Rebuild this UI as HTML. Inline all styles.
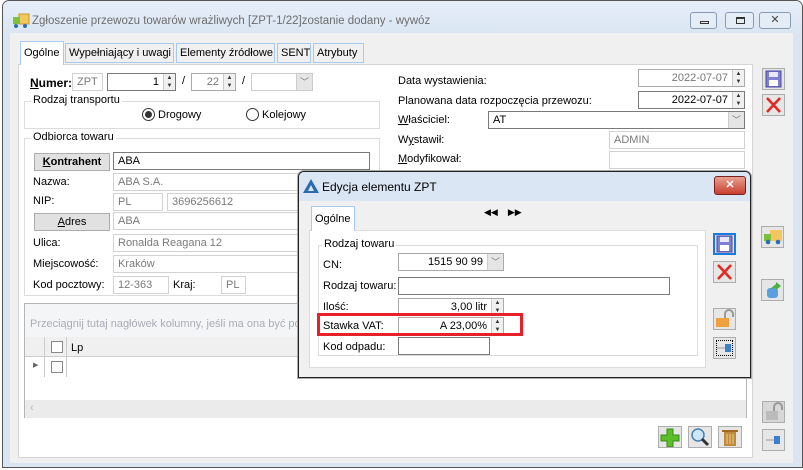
<!DOCTYPE html>
<html><head><meta charset="utf-8"><style>
*{box-sizing:border-box;margin:0;padding:0}
body{width:803px;height:470px;overflow:hidden;background:#fff;font-family:"Liberation Sans",sans-serif;font-size:11px;color:#000;position:relative}
.a{position:absolute}
.box{position:absolute;background:#fff;border:1px solid #c8c8c8;height:18px;line-height:16px;padding:0 4px;color:#000;white-space:nowrap;overflow:hidden}
.dis{color:#7a7a7a;border-color:#d2d2d2}
.dk{border-color:#7a7a7a}
.r{text-align:right}
.lbl{position:absolute;white-space:nowrap}
.grp{position:absolute;border:1px solid #dcdcdc}
.gt{position:absolute;top:-8px;left:6px;background:#fff;padding:0 2px}
.btn{position:absolute;background:#e1e1e1;border:1px solid #adadad;text-align:center;line-height:16px}
.ib{position:absolute;width:23px;height:22px;background:#e6e6e6;border:1px solid #adadad}
.spin{position:absolute;right:0;top:0;width:12px;height:100%;border-left:1px solid #ccc;background:#f0f0f0;font-size:6px;line-height:8px;text-align:center;color:#333}
.cb{position:absolute;right:0;top:0;width:16px;height:100%;border-left:1px solid #ccc;background:#e5e5e5;text-align:center;color:#777;font-size:9px;line-height:16px}
.tab{position:absolute;top:43px;height:20px;border:1px solid #a7cbf0;background:#f0f0f0;line-height:18px;padding:0 3px;white-space:nowrap;overflow:hidden}
</style></head><body>
<div class="a" style="left:2px;top:0;width:801px;height:468px;border:1px solid #555;border-radius:7px 7px 0 0;background:#dae5f2"></div>
<div class="a" style="left:3px;top:1px;width:799px;height:32px;background:linear-gradient(#e6eef8,#dbe6f3);border-radius:6px 6px 0 0"></div>
<svg class="a" style="left:12px;top:13px" width="18" height="16"><rect x="7" y="1" width="10" height="10" fill="#f2c75c" stroke="#c99a2e"/><rect x="1" y="4" width="7" height="7" fill="#7cc13c"/><circle cx="4" cy="13" r="2" fill="#2a6fb5"/><circle cx="13" cy="13" r="2" fill="#2a6fb5"/></svg>
<div class="lbl" style="left:32px;top:15px;font-size:11.5px;color:#6d6d6d">Zgłoszenie przewozu towarów wrażliwych [ZPT-1/22]zostanie dodany - wywóz</div>
<div class="a" style="left:690px;top:12px;width:27px;height:17px;border:1px solid #8a9bb0;border-radius:3px;background:#e4ecf5"><div class="a" style="left:9px;top:8px;width:9px;height:3px;border:1px solid #333"></div></div>
<div class="a" style="left:725px;top:12px;width:29px;height:17px;border:1px solid #8a9bb0;border-radius:3px;background:#e4ecf5"><div class="a" style="left:10px;top:4px;width:9px;height:7px;border:1px solid #333;border-top-width:2px"></div></div>
<div class="a" style="left:759px;top:12px;width:32px;height:17px;border:1px solid #8a9bb0;border-radius:3px;background:#e4ecf5;text-align:center;line-height:14px;color:#444">✕</div>
<div class="a" style="left:10px;top:33px;width:783px;height:430px;background:#f0f0f0"></div>
<div class="a" style="left:18px;top:64px;width:735px;height:394px;background:#fff;border:1px solid #d5d5d5"></div>
<div class="tab" style="left:20px;top:41px;width:44px;height:24px;background:#fff;border-bottom:none;line-height:22px">Ogólne</div>
<div class="tab" style="left:65px;width:109px">Wypełniający i uwagi</div>
<div class="tab" style="left:176px;width:99px">Elementy źródłowe</div>
<div class="tab" style="left:277px;width:34px">SENT</div>
<div class="tab" style="left:313px;width:51px">Atrybuty</div>
<div class="lbl" style="left:30px;top:76px;font-weight:bold;font-size:12px"><u>N</u>umer:</div>
<div class="box dis" style="left:72px;top:73px;width:31px">ZPT</div>
<div class="box r dk" style="left:107px;top:73px;width:69px;padding-right:16px">1<div class="spin">▲<br>▼</div></div>
<div class="lbl" style="left:182px;top:75px">/</div>
<div class="box r" style="left:191px;top:73px;width:45px;padding-right:16px;color:#777;border-color:#aaa">22<div class="spin">▲<br>▼</div></div>
<div class="lbl" style="left:242px;top:75px">/</div>
<div class="box" style="left:251px;top:73px;width:62px;border-color:#ccc"><div class="cb">﹀</div></div>
<div class="grp" style="left:24px;top:101px;width:356px;height:28px"><span class="gt">Rodzaj transportu</span></div>
<div class="a" style="left:142px;top:108px;width:13px;height:13px;border:1px solid #333;border-radius:50%"><div class="a" style="left:2px;top:2px;width:7px;height:7px;background:#333;border-radius:50%"></div></div>
<div class="lbl" style="left:158px;top:109px">Drogowy</div>
<div class="a" style="left:246px;top:108px;width:13px;height:13px;border:1px solid #333;border-radius:50%"></div>
<div class="lbl" style="left:262px;top:109px">Kolejowy</div>
<div class="grp" style="left:24px;top:138px;width:356px;height:158px"><span class="gt">Odbiorca towaru</span></div>
<div class="btn" style="left:34px;top:153px;width:76px;height:18px;font-weight:bold"><u>K</u>ontrahent</div>
<div class="box dk" style="left:113px;top:152px;width:257px">ABA</div>
<div class="lbl" style="left:33px;top:176px">Nazwa:</div>
<div class="box dis" style="left:113px;top:173px;width:200px">ABA S.A.</div>
<div class="lbl" style="left:33px;top:195px">NIP:</div>
<div class="box dis" style="left:113px;top:193px;width:50px">PL</div>
<div class="box dis" style="left:167px;top:193px;width:150px">3696256612</div>
<div class="btn" style="left:34px;top:213px;width:76px;height:18px"><u>A</u>dres</div>
<div class="box dis" style="left:113px;top:212px;width:200px">ABA</div>
<div class="lbl" style="left:33px;top:237px">Ulica:</div>
<div class="box dis" style="left:113px;top:234px;width:200px">Ronalda Reagana 12</div>
<div class="lbl" style="left:33px;top:258px">Miejscowość:</div>
<div class="box dis" style="left:113px;top:255px;width:200px">Kraków</div>
<div class="lbl" style="left:33px;top:279px">Kod pocztowy:</div>
<div class="box dis" style="left:113px;top:276px;width:56px">12-363</div>
<div class="lbl" style="left:173px;top:279px">Kraj:</div>
<div class="box dis" style="left:221px;top:276px;width:25px">PL</div>
<div class="a" style="left:24px;top:303px;width:723px;height:115px;border:1px solid #b5b5b5;background:#fff">
 <div class="a" style="left:0;top:0;width:100%;height:33px;background:#f4f5f7"></div>
 <div class="lbl" style="left:5px;top:14px;color:#a8adb5">Przeciągnij tutaj nagłówek kolumny, jeśli ma ona być pogrupowana</div>
 <div class="a" style="left:0;top:33px;width:100%;height:20px;background:#f0f0f0;border-bottom:1px solid #ccc"></div>
 <div class="a" style="left:19px;top:33px;width:1px;height:40px;background:#ccc"></div>
 <div class="a" style="left:41px;top:33px;width:1px;height:40px;background:#ccc"></div>
 <div class="a" style="left:26px;top:37px;width:12px;height:12px;border:1px solid #888;background:#fff"></div>
 <div class="lbl" style="left:46px;top:38px">Lp</div>
 <div class="a" style="left:26px;top:57px;width:12px;height:12px;border:1px solid #888"></div>
 <div class="lbl" style="left:8px;top:57px;font-size:7px;color:#666">▶</div>
 <div class="a" style="left:0;top:96px;width:100%;height:18px;background:#ebebeb"></div>
 <div class="lbl" style="left:5px;top:98px;color:#bbb">‹</div>
</div>
<div class="lbl" style="left:398px;top:75px">Data wystawienia:</div>
<div class="box r" style="left:638px;top:69px;width:107px;padding-right:16px;color:#777;border-color:#aaa">2022-07-07<div class="spin">▲<br>▼</div></div>
<div class="lbl" style="left:398px;top:95px">Planowana data rozpoczęcia przewozu:</div>
<div class="box r dk" style="left:638px;top:91px;width:107px;padding-right:16px">2022-07-07<div class="spin">▲<br>▼</div></div>
<div class="lbl" style="left:398px;top:114px"><u>W</u>łaściciel:</div>
<div class="box dk" style="left:488px;top:111px;width:257px;line-height:17px">AT<div class="cb">﹀</div></div>
<div class="lbl" style="left:398px;top:134px">W<u>y</u>stawił:</div>
<div class="box dis" style="left:609px;top:131px;width:136px">ADMIN</div>
<div class="lbl" style="left:398px;top:153px"><u>M</u>odyfikował:</div>
<div class="box dis" style="left:609px;top:151px;width:136px"></div>
<div class="ib" style="left:762px;top:68px"><svg width="21" height="20"><rect x="3" y="2" width="15" height="16" fill="#8080d0" stroke="#4848a0"/><rect x="6" y="3" width="9" height="5" fill="#e8e8f8"/><rect x="6" y="11" width="9" height="6" fill="#fff"/></svg></div>
<div class="ib" style="left:762px;top:94px"><svg width="21" height="20"><path d="M4 3 L17 17 M17 3 L4 17" stroke="#e8251f" stroke-width="2.5"/></svg></div>
<div class="ib" style="left:761px;top:226px"><svg width="22" height="20"><rect x="8" y="3" width="12" height="11" fill="#f5c560"/><rect x="2" y="7" width="7" height="7" fill="#7cc13c"/><circle cx="6" cy="15" r="2.3" fill="#2a6fb5"/><circle cx="16" cy="15" r="2.3" fill="#2a6fb5"/></svg></div>
<div class="ib" style="left:761px;top:279px"><svg width="22" height="20"><rect x="5" y="8" width="11" height="10" rx="3" fill="#5aa0e0"/><path d="M8 9 L14 4 L14 2 L19 6 L14 10 L14 8 Z" fill="#4cb040"/></svg></div>
<div class="ib" style="left:762px;top:401px;background:#d8d8d8"><svg width="21" height="20"><path d="M11 9 V5 a4 4 0 0 1 8 0 V8" fill="none" stroke="#999" stroke-width="2"/><rect x="3" y="9" width="12" height="9" fill="#bbb"/></svg></div>
<div class="ib" style="left:762px;top:429px"><svg width="21" height="20"><path d="M3 10 H11" stroke="#999"/><rect x="11" y="6" width="6" height="8" fill="#3a7fd0"/></svg></div>
<div class="ib" style="left:658px;top:426px;width:24px"><svg width="22" height="20"><path d="M8 2 H14 V8 H20 V14 H14 V20 H8 V14 H2 V8 H8 Z" fill="#5cbf2a" stroke="#3a8a18"/></svg></div>
<div class="ib" style="left:688px;top:426px;width:24px"><svg width="22" height="20"><circle cx="9" cy="8" r="6" fill="#cde6f8" stroke="#4a7fb0" stroke-width="1.5"/><path d="M13 12 L19 18" stroke="#333" stroke-width="3"/></svg></div>
<div class="ib" style="left:718px;top:426px;width:24px"><svg width="22" height="20"><rect x="5" y="5" width="12" height="14" fill="#c08a3a"/><rect x="3" y="3" width="16" height="2" fill="#a06a20"/><path d="M8 7 V17 M11 7 V17 M14 7 V17" stroke="#f0d090"/></svg></div>
<div class="a" style="left:298px;top:171px;width:453px;height:207px;border:1px solid #222;border-radius:6px 6px 0 0;background:#f0f0f0;box-shadow:0 0 0 1px #aaa"></div>
<div class="a" style="left:299px;top:172px;width:451px;height:29px;background:#dbe6f4;border-radius:5px 5px 0 0"></div>
<svg class="a" style="left:303px;top:179px" width="16" height="14"><path d="M8 0 L16 14 H0 Z" fill="#2b6cb0"/><path d="M8 6 L11 12 H5 Z" fill="#dbe6f4"/></svg>
<div class="lbl" style="left:322px;top:180px;font-size:12px">Edycja elementu ZPT</div>
<div class="a" style="left:714px;top:176px;width:32px;height:19px;border:1px solid #7a2020;border-radius:3px;background:linear-gradient(#e8a090,#c84030);color:#fff;text-align:center;font-weight:bold;line-height:17px">✕</div>
<div class="a" style="left:309px;top:230px;width:397px;height:138px;background:#fff;border:1px solid #dcdcdc"></div>
<div class="a" style="left:311px;top:206px;width:44px;height:25px;background:#fff;border:1px solid #a7cbf0;border-bottom:none;padding:6px 0 0 3px">Ogólne</div>
<div class="lbl" style="left:484px;top:207px;font-size:9px">◀◀&nbsp;&nbsp;&nbsp;&nbsp;▶▶</div>
<div class="grp" style="left:318px;top:245px;width:380px;height:111px"><span class="gt" style="left:3px">Rodzaj towaru</span></div>
<div class="lbl" style="left:323px;top:259px">CN:</div>
<div class="box r" style="left:398px;top:253px;width:106px;padding-right:20px;border-color:#aaa">1515 90 99<div class="cb">﹀</div></div>
<div class="lbl" style="left:323px;top:280px">Rodzaj towaru:</div>
<div class="box dk" style="left:398px;top:277px;width:272px"></div>
<div class="lbl" style="left:323px;top:301px">Ilość:</div>
<div class="box r" style="left:398px;top:298px;width:106px;padding-right:16px;border-color:#aaa">3,00 litr<div class="spin">▲<br>▼</div></div>
<div class="lbl" style="left:323px;top:320px">Stawka VAT:</div>
<div class="box r" style="left:398px;top:317px;width:106px;padding-right:16px;border-color:#aaa">A 23,00%<div class="spin">▲<br>▼</div></div>
<div class="a" style="left:317px;top:313px;width:206px;height:23px;border:3px solid #e8202a"></div>
<div class="lbl" style="left:323px;top:341px">Kod odpadu:</div>
<div class="box dk" style="left:398px;top:337px;width:92px"></div>
<div class="ib" style="left:713px;top:233px;border:2px solid #1a7ae0"><svg width="19" height="18"><rect x="2" y="1" width="15" height="16" fill="#8080d0" stroke="#4848a0"/><rect x="5" y="2" width="9" height="5" fill="#e8e8f8"/><rect x="5" y="10" width="9" height="6" fill="#fff"/></svg></div>
<div class="ib" style="left:713px;top:261px"><svg width="21" height="20"><path d="M4 3 L17 17 M17 3 L4 17" stroke="#e8251f" stroke-width="2.5"/></svg></div>
<div class="ib" style="left:713px;top:308px"><svg width="21" height="20"><path d="M11 9 V5 a4 4 0 0 1 8 0 V8" fill="none" stroke="#999" stroke-width="2"/><rect x="2" y="9" width="13" height="9" fill="#f0a040"/></svg></div>
<div class="ib" style="left:713px;top:337px"><div class="a" style="left:2px;top:2px;width:17px;height:16px;border:1px dotted #000"></div><svg class="a" style="left:0;top:0" width="21" height="20"><path d="M3 10 H11" stroke="#999"/><rect x="11" y="6" width="6" height="8" fill="#3a7fd0"/></svg></div>
</body></html>
